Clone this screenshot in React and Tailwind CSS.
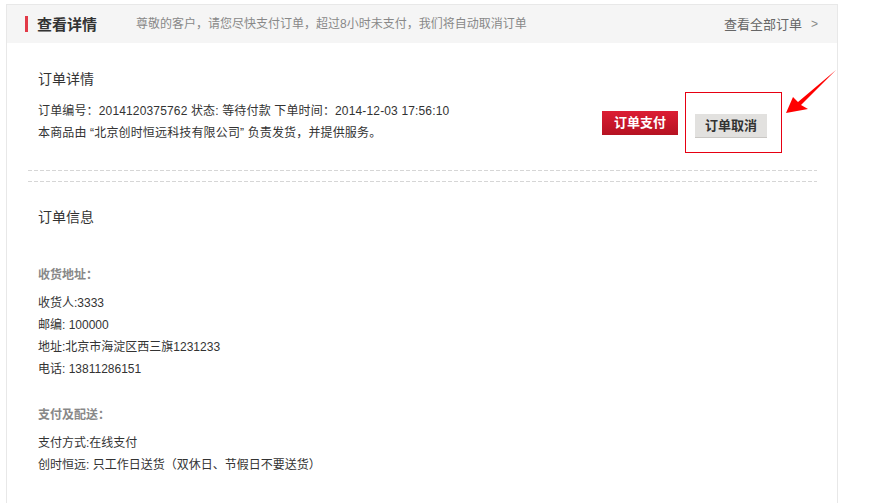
import React from "react";

const font = "font-['Liberation_Sans','Noto_Sans_CJK_SC',sans-serif]";

function Dashed() {
  return (
    <div className="ml-[21px] mr-[20px] h-px bg-[linear-gradient(to_right,#d6d6d6_4px,transparent_4px)] bg-[length:6px_1px] bg-repeat-x" />
  );
}

export default function App() {
  return (
    <div className={`relative w-[871px] h-[503px] overflow-hidden bg-white text-[#333] ${font}`}>
      <div className="ml-[6px] mt-[4px] w-[832px] h-[510px] border border-[#e8e8e8]">
        {/* header */}
        <div className="h-[38px] bg-[#f5f5f5] flex items-center pl-[18px] pr-[19px]">
          <div className="w-[3px] h-[16px] bg-[#e23a48]" />
          <div className="ml-[9px] text-[15px] font-bold text-[#333] leading-none">查看详情</div>
          <div className="ml-[39px] text-[12px] text-[#888] leading-none">
            尊敬的客户，请您尽快支付订单，超过8小时未支付，我们将自动取消订单
          </div>
          <div className="ml-auto text-[13px] text-[#666] leading-none flex items-center">
            查看全部订单<span className="ml-[9px] text-[12px] text-[#888]">&gt;</span>
          </div>
        </div>

        {/* section 1 */}
        <div className="h-[127px] flex pl-[31px] pr-[55px]">
          <div className="pt-[26px]">
            <div className="text-[14px] leading-[20px]">订单详情</div>
            <div className="mt-[11px] text-[12px] leading-[22px] tracking-[0.15px]">
              <div>订单编号：2014120375762 状态: 等待付款 下单时间：2014-12-03 17:56:10</div>
              <div>本商品由 “北京创时恒远科技有限公司” 负责发货，并提供服务。</div>
            </div>
          </div>
          <div className="ml-auto flex items-start">
            <button className="mt-[68px] w-[76px] h-[24px] bg-[linear-gradient(to_bottom,#dc1d34,#b51222)] text-white text-[13px] font-bold leading-[24px] text-center">
              订单支付
            </button>
            <div className="ml-[7px] mt-[49px] w-[97px] h-[61px] border border-[#e60012] pl-[9px] pt-[20px]">
              <button className="w-[72px] h-[24px] bg-[#e2e1df] border-b border-[#c9c7c4] text-[#333] text-[13px] font-bold leading-[23px] text-center">
                订单取消
              </button>
            </div>
          </div>
        </div>

        <Dashed />
        <div className="h-[10px]" />
        <Dashed />

        {/* section 2 */}
        <div className="pl-[31px] pt-[25px] text-[12px]">
          <div className="text-[14px] leading-[20px]">订单信息</div>
          <div className="mt-[37px] leading-[22px] font-bold text-[#888]">收货地址：</div>
          <div className="mt-[6px] leading-[22px]">
            <div>收货人:3333</div>
            <div>邮编: 100000</div>
            <div>地址:北京市海淀区西三旗1231233</div>
            <div>电话: 13811286151</div>
          </div>
          <div className="mt-[24px] leading-[22px] font-bold text-[#888]">支付及配送：</div>
          <div className="mt-[6px] leading-[22px]">
            <div>支付方式:在线支付</div>
            <div>创时恒远: 只工作日送货（双休日、节假日不要送货）</div>
          </div>
        </div>
      </div>

      {/* annotation arrow */}
      <svg className="absolute left-0 top-0" width="871" height="503" viewBox="0 0 871 503">
        <polygon points="786,113 793,97 798,102 836,70 801,105 808,109" fill="#ff0000" />
      </svg>
    </div>
  );
}
